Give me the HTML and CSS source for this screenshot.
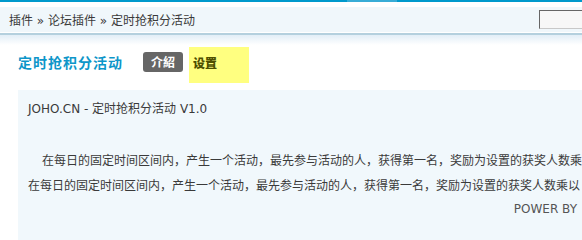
FILE: index.html
```html
<!DOCTYPE html>
<html lang="zh-CN">
<head>
<meta charset="utf-8">
<title>定时抢积分活动</title>
<link rel="stylesheet" href="styles.css">
</head>
<body>
<div class="topbar"><span class="topbar-seg"></span></div>
<div class="crumbs">
  <span class="crumbs-text">插件 » 论坛插件 » 定时抢积分活动</span>
  <input class="search" type="text">
</div>
<div class="crumbs-line"></div>
<div class="crumbs-fade"></div>
<div class="head">
  <h1 class="title">定时抢积分活动</h1>
  <span class="tab tab-dark">介紹</span>
  <span class="tab tab-on">设置</span>
</div>
<div class="panel">
  <div class="line">JOHO.CN - 定时抢积分活动 V1.0</div>
  <div class="line">&nbsp;</div>
  <div class="line cn indent">在每日的固定时间区间内，产生一个活动，最先参与活动的人，获得第一名，奖励为设置的获奖人数乘</div>
  <div class="line cn">在每日的固定时间区间内，产生一个活动，最先参与活动的人，获得第一名，奖励为设置的获奖人数乘以</div>
  <div class="line power">POWER BY</div>
</div>
</body>
</html>
```
FILE: styles.css
```css
html, body {
  margin: 0;
  padding: 0;
  overflow: hidden;
  background: #fff;
}
body {
  font-family: "DejaVu Sans", "Noto Sans CJK SC", sans-serif;
  font-size: 12px;
  color: #333;
}
.topbar {
  height: 2px;
  background: #0099cc;
  display: flex;
}
.topbar-seg {
  margin-left: 347px;
  width: 50px;
  background: #38acd6;
}
.crumbs {
  margin-top: 5px;
  height: 25px;
  background: #f0f7fb;
  display: flex;
  align-items: center;
  padding-left: 9px;
}
.crumbs-text {
  color: #3a3a3a;
  white-space: nowrap;
}
.search {
  margin-left: auto;
  margin-right: -17px;
  width: 60px;
  height: 19px;
  box-sizing: border-box;
  border: 1px solid #c8c8c8;
  border-top-color: #666;
  border-left-color: #666;
  background: #f7f7f7;
  padding: 0;
}
.crumbs-line {
  margin-top: 1px;
  height: 2px;
  background: #b4d0de;
}
.crumbs-fade {
  height: 10px;
  background: linear-gradient(#e2eef7, #fff);
}
.head {
  display: flex;
  align-items: flex-start;
  margin-top: 2px;
  padding-left: 18px;
}
.title {
  margin: 6px 0 0 0;
  font-size: 14px;
  line-height: 18px;
  font-weight: bold;
  letter-spacing: 1px;
  color: #0d96c9;
  font-family: "Noto Sans CJK SC", sans-serif;
  width: 125px;
}
.tab {
  font-family: "Noto Sans CJK SC", sans-serif;
  font-weight: bold;
  font-size: 12px;
}
.tab-dark {
  margin-top: 5px;
  height: 20px;
  line-height: 20px;
  padding: 0 8px 0 8px;
  background: #666;
  color: #fff;
  border-radius: 3px;
}
.tab-on {
  margin-left: 6px;
  width: 60px;
  box-sizing: border-box;
  height: 36px;
  padding: 7px 0 0 4px;
  line-height: 18px;
  background: #ffff80;
  color: #4f4f00;
  font-weight: 900;
}
.panel {
  margin: 7px -30px 0 18px;
  background: #f1f8fc;
  padding: 7px 0 20px 10px;
  overflow: hidden;
}
.line {
  line-height: 25px;
  white-space: nowrap;
  color: #3a3a3a;
}
.cn {
  font-family: "Noto Sans CJK SC", sans-serif;
}
.indent {
  text-indent: 14px;
}
.power {
  text-align: right;
  padding-right: 35px;
  color: #555;
}
```
